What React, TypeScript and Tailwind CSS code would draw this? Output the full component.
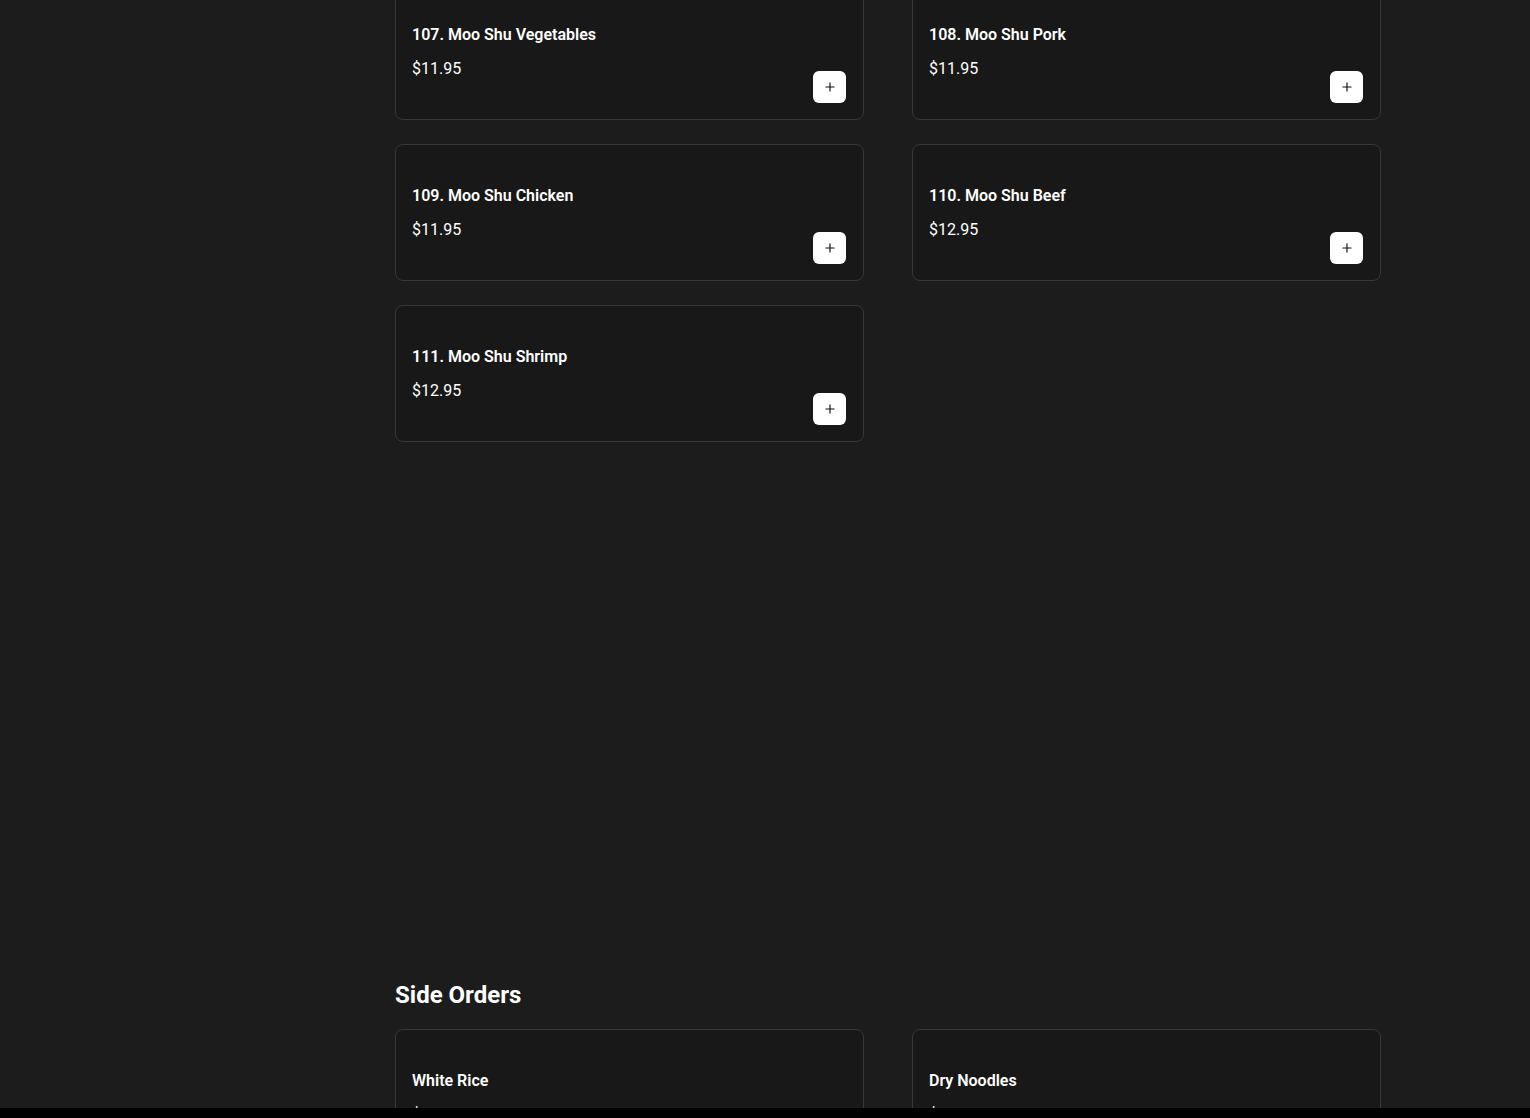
import { Plus } from "lucide-react";

type Item = { name: string; price: string };

const mooShu: Item[] = [
  { name: "107. Moo Shu Vegetables", price: "$11.95" },
  { name: "108. Moo Shu Pork", price: "$11.95" },
  { name: "109. Moo Shu Chicken", price: "$11.95" },
  { name: "110. Moo Shu Beef", price: "$12.95" },
  { name: "111. Moo Shu Shrimp", price: "$12.95" },
];

const sides: Item[] = [
  { name: "White Rice", price: "$2.50" },
  { name: "Dry Noodles", price: "$1.50" },
];

function MenuCard({ item }: { item: Item }) {
  return (
    <div className="h-[137px] rounded-lg border border-[#383838] bg-[#181818] p-4 flex items-center justify-between">
      <div className="flex flex-col gap-[10px]">
        <h3 className="text-base leading-6 font-semibold text-white">{item.name}</h3>
        <p className="text-base leading-6 text-white">{item.price}</p>
      </div>
      <button
        type="button"
        className="self-end mr-px w-[33px] h-[32px] rounded-md bg-white flex items-center justify-center text-[#111]"
      >
        <Plus className="h-3.5 w-3.5" strokeWidth={2} />
      </button>
    </div>
  );
}

export default function App() {
  return (
    <div
      className="min-h-screen bg-[#1c1c1c] flex overflow-hidden"
      style={{ fontFamily: "Roboto, 'Liberation Sans', sans-serif" }}
    >
      <aside className="w-[246px] shrink-0" />
      <main className="flex-1 flex justify-center">
        <div className="w-[986px] pb-10">
          <section className="-mt-[17px] grid grid-cols-2 gap-x-12 gap-y-6">
            {mooShu.map((item) => (
              <MenuCard key={item.name} item={item} />
            ))}
          </section>

          <section className="mt-[537px]">
            <h2 className="text-2xl leading-8 font-bold text-white mb-[18px]">Side Orders</h2>
            <div className="grid grid-cols-2 gap-x-12 gap-y-6">
              {sides.map((item) => (
                <MenuCard key={item.name} item={item} />
              ))}
            </div>
          </section>
        </div>
      </main>
      <div className="fixed bottom-0 inset-x-0 h-[10px] bg-black" />
    </div>
  );
}
